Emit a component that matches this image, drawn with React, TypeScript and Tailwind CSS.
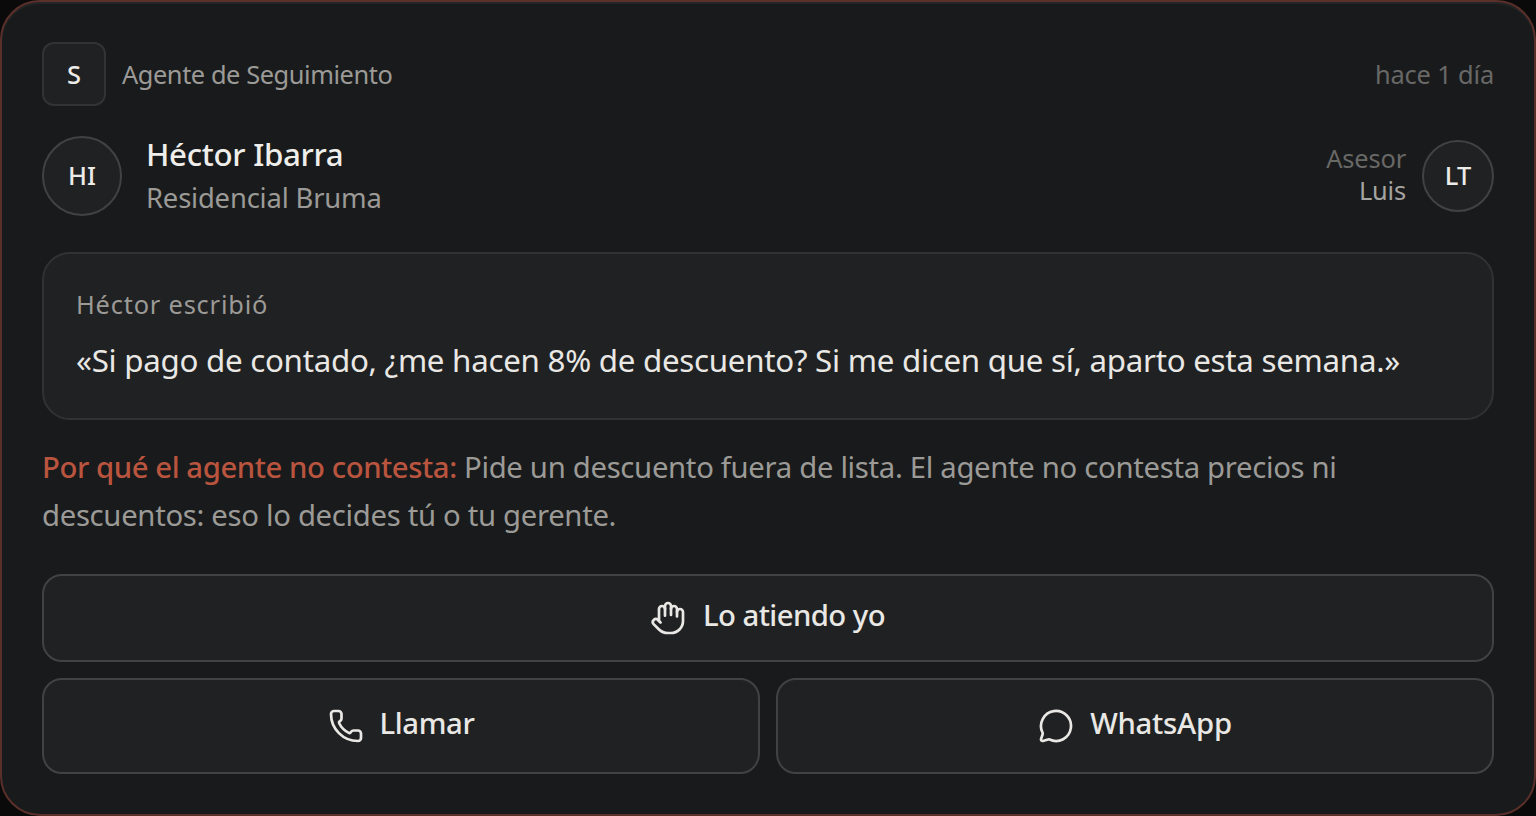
import React from "react";
import { Hand, MessageCircle, Phone } from "lucide-react";

interface AvatarProps {
  initials: string;
  className: string;
}

const Avatar = ({ initials, className }: AvatarProps) => (
  <div
    className={`flex shrink-0 items-center justify-center border-2 bg-[#202122] text-[25.4px] leading-8 text-[#ecebe8] font-medium ${className}`}
  >
    {initials}
  </div>
);

interface ActionButtonProps {
  label: string;
  labelClass: string;
  icon: React.ReactNode;
  className: string;
}

const ActionButton = ({ label, labelClass, icon, className }: ActionButtonProps) => (
  <button
    type="button"
    className={`flex items-center justify-center rounded-[20px] border-2 border-[#414243] bg-[#202122] text-[#e9e8e5] text-[29.3px] leading-10 font-medium ${className}`}
  >
    {icon}
    <span className={`pb-1.5 whitespace-nowrap ${labelClass}`}>{label}</span>
  </button>
);

const App: React.FC = () => {
  return (
    <div className="w-[1536px] h-[816px] bg-[#0b0a0a] overflow-hidden font-['Noto_Sans',sans-serif]">
      <div className="h-full rounded-[40px] border-2 border-[#5b302b] bg-[#191a1b] px-10 pt-10 shadow-[inset_0_2px_0_#242526]">
        {/* Agent row */}
        <div className="flex h-16 items-center">
          <Avatar initials="S" className="size-16 rounded-xl border-[#323334]" />
          <span className="ml-4 text-[25.4px] leading-8 tracking-[-0.43px] text-[#9b9a97] whitespace-nowrap">
            Agente de Seguimiento
          </span>
          <span className="ml-auto text-[25.4px] leading-8 tracking-[-0.15px] text-[#686867] whitespace-nowrap">
            hace 1 día
          </span>
        </div>

        {/* Contact and advisor */}
        <div className="mt-[30px] flex h-20 items-center">
          <Avatar initials="HI" className="size-20 rounded-full border-[#414243] pb-0.5" />
          <div className="ml-6 whitespace-nowrap">
            <p className="text-[31.3px] leading-[42px] tracking-[-0.3px] font-medium text-[#efeeeb]">Héctor Ibarra</p>
            <p className="pt-0.5 text-[27.4px] leading-[42px] tracking-[-0.18px] text-[#9b9a97]">Residencial Bruma</p>
          </div>
          <div className="ml-auto mr-4 pb-1 text-right text-[25.4px] leading-8 whitespace-nowrap">
            <p className="tracking-[-0.15px] text-[#686867]">Asesor</p>
            <p className="tracking-[-0.15px] text-[#a5a4a1]">Luis</p>
          </div>
          <Avatar initials="LT" className="size-[72px] rounded-full border-[#414243] pr-px pb-0.5 tracking-[-1px]" />
        </div>

        {/* Quoted message */}
        <div className="mt-9 h-[168px] rounded-[28px] border-2 border-[#313233] bg-[#202122] px-8 pt-[31px] whitespace-nowrap">
          <p className="text-[25.4px] leading-[38px] tracking-[0.8px] text-[#9b9a97]">Héctor escribió</p>
          <p className="mt-[11px] text-[31.3px] leading-[52px] tracking-[-0.275px] text-[#e9e8e5]">
            «Si pago de contado, ¿me hacen 8% de descuento? Si me dicen que sí, aparto esta semana.»
          </p>
        </div>

        <p className="mt-[23px] text-[29.3px] leading-12 tracking-[-0.32px] text-[#9b9a97] whitespace-nowrap">
          <span className="font-medium tracking-[-0.43px] text-[#b9543f]">Por qué el agente no contesta:</span>{" "}
          <span>Pide un descuento fuera de lista. El agente no contesta precios ni</span>
          <br />
          <span>descuentos: eso lo decides tú o tu gerente.</span>
        </p>

        {/* Actions */}
        <div className="mt-[35px] grid grid-cols-2 gap-4">
          <ActionButton
            label="Lo atiendo yo"
            labelClass="tracking-[-0.55px]"
            icon={<Hand size={36} strokeWidth={1.8} className="-ml-px mr-[17px]" />}
            className="col-span-2 h-[88px]"
          />
          <ActionButton
            label="Llamar"
            labelClass="tracking-[-0.35px]"
            icon={<Phone size={36} strokeWidth={1.8} className="ml-px mr-[15px]" />}
            className="h-24"
          />
          <ActionButton
            label="WhatsApp"
            labelClass="tracking-[-0.25px]"
            icon={<MessageCircle size={36} strokeWidth={1.8} className="mr-4" />}
            className="h-24"
          />
        </div>
      </div>
    </div>
  );
};

export default App;
